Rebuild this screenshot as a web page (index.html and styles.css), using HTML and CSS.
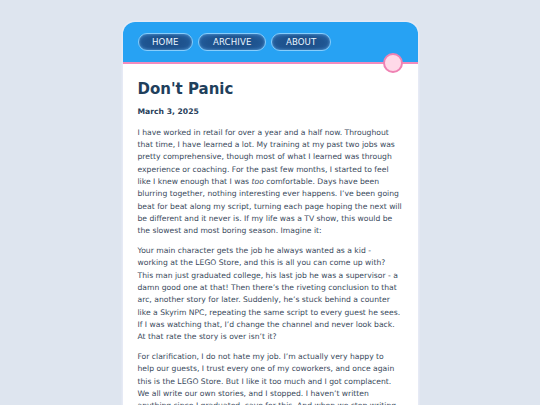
FILE: index.html
```html
<!DOCTYPE html>
<html>
<head>
<meta charset="utf-8">
<link rel="stylesheet" href="styles.css">
</head>
<body>
<div class="card">
  <header class="bar">
    <nav class="nav">
      <a class="btn">HOME</a>
      <a class="btn">ARCHIVE</a>
      <a class="btn">ABOUT</a>
    </nav>
    <span class="knob"></span>
  </header>
  <main class="content">
    <h1 class="title">Don't Panic</h1>
    <p class="date">March 3, 2025</p>
    <p>I have worked in retail for over a year and a half now. Throughout that time, I have learned a lot. My training at my past two jobs was pretty comprehensive, though most of what I learned was through experience or coaching. For the past few months, I started to feel like I knew enough that I was <em>too</em> comfortable. Days have been blurring together, nothing interesting ever happens. I’ve been going beat for beat along my script, turning each page hoping the next will be different and it never is. If my life was a TV show, this would be the slowest and most boring season. Imagine it:</p>
    <p>Your main character gets the job he always wanted as a kid - working at the LEGO Store, and this is all you can come up with? This man just graduated college, his last job he was a supervisor - a damn good one at that! Then there’s the riveting conclusion to that arc, another story for later. Suddenly, he’s stuck behind a counter like a Skyrim NPC, repeating the same script to every guest he sees. If I was watching that, I’d change the channel and never look back. At that rate the story is over isn’t it?</p>
    <p>For clarification, I do not hate my job. I’m actually very happy to help our guests, I trust every one of my coworkers, and once again this is the LEGO Store. But I like it too much and I got complacent. We all write our own stories, and I stopped. I haven’t written anything since I graduated, save for this. And when we stop writing our own stories, someone else starts writing them for us.</p>
  </main>
</div>
</body>
</html>
```

FILE: styles.css
```css
html, body {
  margin: 0;
  padding: 0;
}
body {
  background: #dee5ef;
  font-family: "DejaVu Sans", Verdana, sans-serif;
  overflow: hidden;
  height: 405px;
}
.card {
  width: 295px;
  margin: 22px auto 0;
  background: #ffffff;
  border-radius: 12px 12px 0 0;
  box-shadow: 0 0 0 1.5px #e6eaf5;
  height: 420px;
}
.bar {
  position: relative;
  background: #27a2f3;
  border-radius: 12px 12px 0 0;
  border-bottom: 2px solid #f28bbd;
  padding: 11px 0 0 15px;
  height: 29px;
}
.nav {
  display: flex;
  gap: 5.5px;
}
.btn {
  display: block;
  height: 16px;
  line-height: 16px;
  padding: 0 13.5px;
  border: 1px solid #86cdfc;
  border-radius: 9px;
  background: radial-gradient(ellipse at 50% 55%, #1c4c85 0%, #1f5591 55%, #2b6db3 100%);
  box-shadow: inset 0 0 3px rgba(140, 210, 255, 0.55);
  color: #eaf5ff;
  font-size: 8.6px;
  letter-spacing: 0.1px;
}
.knob {
  position: absolute;
  right: 15px;
  bottom: -11px;
  width: 16px;
  height: 16px;
  border-radius: 50%;
  background: #ffd9e8;
  border: 2px solid #ef82b3;
}
.content {
  padding: 15.5px 15.2px 0 15px;
  color: #3a4a5c;
  font-size: 7.65px;
  line-height: 12.35px;
}
.title {
  margin: 0;
  font-size: 15px;
  line-height: 18px;
  font-weight: bold;
  color: #1f405c;
}
.content p {
  margin: 0 0 7.3px;
}
.content p.date {
  margin: 8.7px 0 8px;
  font-weight: bold;
  color: #28405a;
}
```
